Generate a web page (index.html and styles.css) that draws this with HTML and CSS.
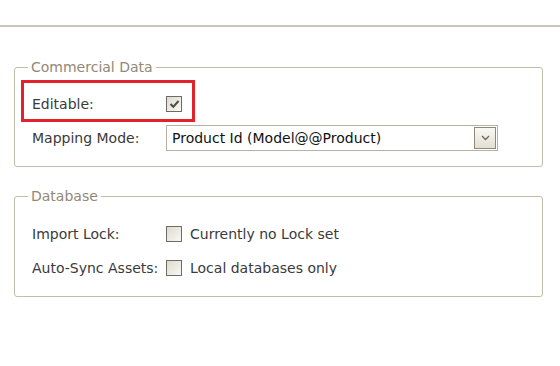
FILE: index.html
```html
<!doctype html>
<html>
  <head>
    <meta charset="utf-8" />
    <title>Settings</title>
    <link rel="stylesheet" href="styles.css">
  </head>
  <body>
    <div class="topbar"></div>

    <fieldset class="group group-commercial">
      <legend>Commercial Data</legend>
      <div class="highlight"></div>
      <div class="rows">
        <div class="row">
          <span class="label">Editable:</span>
          <span class="checkbox checked">
            <svg width="11" height="10" viewBox="0 0 11 10">
              <path d="M1.5 5 L4.3 7.8 L9.5 2" fill="none" stroke="#4d4a44" stroke-width="2" />
            </svg>
          </span>
        </div>
        <div class="row">
          <span class="label">Mapping Mode:</span>
          <div class="select">
            <span class="select-text">Product Id (Model@@Product)</span>
            <span class="select-btn">
              <svg width="9" height="6" viewBox="0 0 9 6">
                <path d="M1 1 L4.5 4.5 L8 1" fill="none" stroke="#6a6658" stroke-width="1.3" />
              </svg>
            </span>
          </div>
        </div>
      </div>
    </fieldset>

    <fieldset class="group group-database">
      <legend>Database</legend>
      <div class="rows">
        <div class="row">
          <span class="label">Import Lock:</span>
          <span class="checkbox"></span>
          <span class="check-text">Currently no Lock set</span>
        </div>
        <div class="row">
          <span class="label">Auto-Sync Assets:</span>
          <span class="checkbox"></span>
          <span class="check-text">Local databases only</span>
        </div>
      </div>
    </fieldset>
  </body>
</html>
```

FILE: styles.css
```css
body {
  margin: 0;
  background: #fff;
  font-family: "DejaVu Sans", Verdana, sans-serif;
  font-size: 14px;
  color: #3a3a3a;
}

.topbar {
  height: 2px;
  margin-top: 25px;
  background-color: #cbc5b7;
}

.group {
  position: relative;
  width: 492px;
  margin: 32px 0 0 14px;
  padding: 16px 18px 15px 17px;
  border: 1px solid #c2bcab;
  border-radius: 3px;
}

.group-database {
  margin-top: 21px;
  padding-top: 17px;
}

legend {
  margin-left: -4px;
  padding: 0 3px;
  line-height: 16px;
  font-size: 14px;
  color: #928876;
}

.rows {
  display: flex;
  flex-direction: column;
  gap: 8px;
}

.row {
  display: flex;
  align-items: center;
  height: 26px;
}

.label {
  width: 134px;
  flex-shrink: 0;
}

.checkbox {
  display: flex;
  align-items: center;
  justify-content: center;
  width: 14px;
  height: 14px;
  border: 1px solid #6f6b63;
  background: linear-gradient(135deg, #dedbd0, #f8f7f2);
}

.check-text {
  margin-left: 8px;
}

.select {
  display: flex;
  align-items: center;
  width: 330px;
  height: 24px;
  border: 1px solid #b8b2a2;
  background: #fff;
}

.select-text {
  flex: 1;
  padding-left: 5px;
  color: #111;
}

.select-btn {
  display: flex;
  align-items: center;
  justify-content: center;
  width: 20px;
  height: 20px;
  margin-right: 1px;
  border: 1px solid #8f897a;
  background: linear-gradient(#f9f8f4, #e2dfd3);
}

.highlight {
  position: absolute;
  left: 6px;
  top: 5px;
  width: 174px;
  height: 42px;
  box-sizing: border-box;
  border: 3px solid #e2212b;
}
```
